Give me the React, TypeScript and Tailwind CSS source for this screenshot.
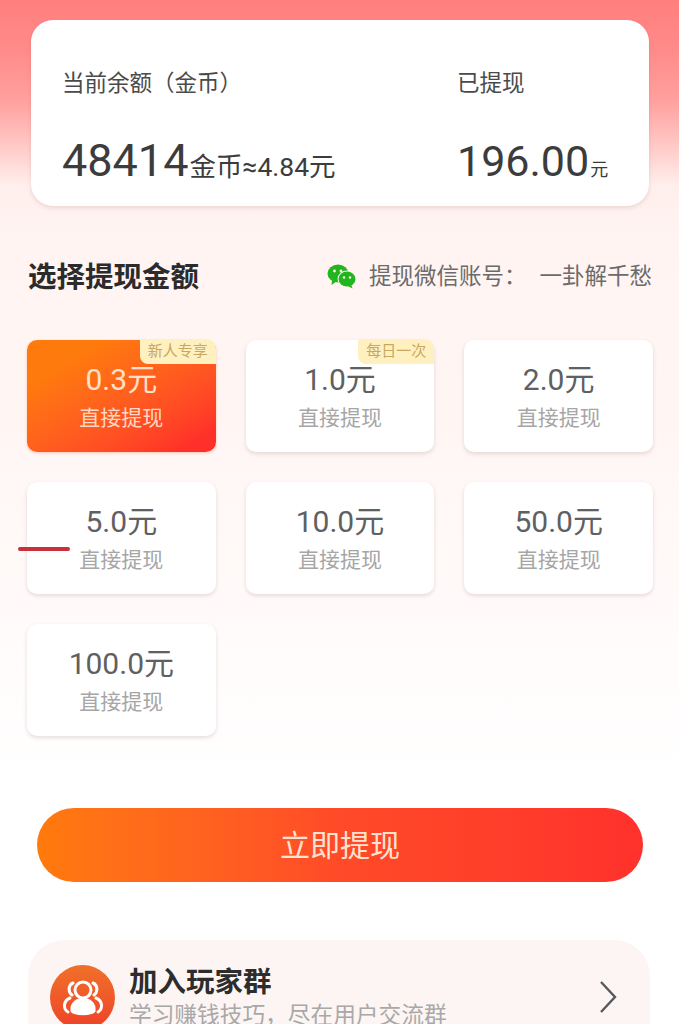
const cjk = "font-['Roboto','Noto_Sans_CJK_SC',sans-serif]";

type Amount = {
  value: string;
  tag?: string;
  active?: boolean;
  mark?: boolean;
};

const amounts: Amount[] = [
  { value: "0.3", tag: "新人专享", active: true },
  { value: "1.0", tag: "每日一次" },
  { value: "2.0" },
  { value: "5.0", mark: true },
  { value: "10.0" },
  { value: "50.0" },
  { value: "100.0" },
];

const WechatIcon = () => (
  <svg width="30" height="25" viewBox="0 0 30 25" className="shrink-0">
    <ellipse cx="11" cy="9.5" rx="10.5" ry="9" fill="#22b51e" />
    <path d="M5 16 L4.5 21 L10 17 Z" fill="#22b51e" />
    <ellipse cx="20" cy="15" rx="9.5" ry="8.5" fill="#fff5f3" />
    <ellipse cx="20" cy="15" rx="8.5" ry="7.5" fill="#22b51e" />
    <path d="M24 20 L25.5 24.5 L20 21.5 Z" fill="#22b51e" />
    <circle cx="7.5" cy="7" r="1.4" fill="#fff5f3" />
    <circle cx="14" cy="7" r="1.4" fill="#fff5f3" />
    <circle cx="17" cy="13.5" r="1.2" fill="#fff5f3" />
    <circle cx="23" cy="13.5" r="1.2" fill="#fff5f3" />
  </svg>
);

const GroupIcon = () => (
  <svg width="42" height="36" viewBox="0 0 42 36" fill="none" stroke="#fff" strokeWidth="3">
    <path d="M11 3 C6 5 6 12 10 15 M6 32 C1 29 1 21 8 18" strokeLinecap="round" />
    <path d="M31 3 C36 5 36 12 32 15 M36 32 C41 29 41 21 34 18" strokeLinecap="round" />
    <circle cx="21" cy="10" r="8" />
    <path d="M10 31 C9 23 15 19.5 21 19.5 C27 19.5 33 23 32 31 C29 34.5 13 34.5 10 31 Z" fill="#fff" />
  </svg>
);

const AmountCard = ({ item }: { item: Amount }) => (
  <div
    className={`relative h-[112px] rounded-[10px] flex flex-col items-center pt-[21px] ${
      item.active
        ? "bg-gradient-to-br from-[#ff7a0c] from-20% to-[#ff3029] to-90% shadow-[0_1px_3px_rgba(255,120,60,0.4)]"
        : "bg-white shadow-[0_2px_4px_rgba(110,80,80,0.18)]"
    }`}
  >
    {item.tag && (
      <span className="absolute -top-px right-0 h-[25px] w-[76px] rounded-tr-[10px] rounded-bl-[8px] bg-[#fff0c0] flex items-center justify-center text-[15px] text-[#c9a760]">
        {item.tag}
      </span>
    )}
    <span
      className={`text-[30px] leading-[38px] ${
        item.active ? "text-[#ffe0c8]" : "text-[#5f6062]"
      }`}
    >
      {item.value}元
    </span>
    <span
      className={`mt-[5px] text-[21px] leading-[28px] ${
        item.active ? "text-[#ffd8c0]" : "text-[#a6a6a6]"
      }`}
    >
      直接提现
    </span>
    {item.mark && (
      <span className="absolute left-[-9px] top-[65px] h-[4px] w-[52px] rounded-full bg-[#c8303c]" />
    )}
  </div>
);

const App = () => {
  return (
    <div
      className={`${cjk} h-[1024px] overflow-hidden bg-[linear-gradient(180deg,#ff7f7e_0px,#ff8b89_50px,#ffa09e_100px,#ffcdca_150px,#ffefec_185px,#fff4f2_240px,#fff6f4_420px,#ffffff_780px)]`}
    >
      <div className="pt-5 pl-[31px] pr-[30px]">
        <div className="h-[186px] rounded-[22px] bg-white shadow-[0_2px_4px_rgba(150,90,90,0.18)] pl-[31px] pt-[47px] flex">
          <div className="w-[395px]">
            <p className="text-[22.5px] leading-[32px] text-[#4a4a4a]">当前余额（金币）</p>
            <p className="mt-[32px] flex items-baseline text-[#3c3c3c]">
              <span className="text-[45px] leading-[60px]">48414</span>
              <span className="ml-[1px] text-[26.5px]">金币≈4.84元</span>
            </p>
          </div>
          <div>
            <p className="text-[22.5px] leading-[32px] text-[#4a4a4a]">已提现</p>
            <p className="mt-[32px] flex items-baseline text-[#3c3c3c]">
              <span className="text-[43px] leading-[60px]">196.00</span>
              <span className="ml-[1px] text-[18px]">元</span>
            </p>
          </div>
        </div>
      </div>

      <div className="mt-[52px] pl-[28px] pr-[27px] flex items-center justify-between h-[40px]">
        <h2 className="text-[28.5px] font-bold text-[#2b2b2b] mt-[1px]">选择提现金额</h2>
        <div className="flex items-center text-[#6b6b6b] text-[22.5px] -mt-[3px]">
          <WechatIcon />
          <span className="ml-[12px]">提现微信账号：</span>
          <span className="ml-[13px]">一卦解千愁</span>
        </div>
      </div>

      <div className="mt-[42px] pl-[27px] pr-[26px] grid grid-cols-3 gap-x-[30px] gap-y-[30px]">
        {amounts.map((item) => (
          <AmountCard key={item.value} item={item} />
        ))}
      </div>

      <div className="mt-[72px] pl-[37px] pr-[36px]">
        <button className="w-full h-[74px] rounded-full bg-gradient-to-r from-[#ff7a0c] via-[#ff4a28] to-[#ff312c] text-[30px] text-[#ffe3d0]">
          立即提现
        </button>
      </div>

      <div className="mt-[58px] ml-[28px] mr-[29px] h-[120px] rounded-[36px] bg-[#fdf5f3] pl-[22px] pr-[32px] pt-[25px] flex items-start">
        <div className="w-[65px] h-[65px] rounded-full bg-gradient-to-b from-[#f0702a] to-[#ee3f28] flex items-center justify-center shrink-0">
          <GroupIcon />
        </div>
        <div className="ml-[14px] flex-1 -mt-[1px]">
          <p className="text-[28.5px] leading-[38px] font-bold text-[#2d2d2d]">加入玩家群</p>
          <p className="text-[22.7px] leading-[27px] text-[#a8a8a8]">学习赚钱技巧，尽在用户交流群</p>
        </div>
        <svg width="20" height="34" viewBox="0 0 20 34" fill="none" stroke="#55585c" strokeWidth="2.4" className="mt-[15px]">
          <path d="M3 2 L17 17 L3 32" />
        </svg>
      </div>
    </div>
  );
};

export default App;
